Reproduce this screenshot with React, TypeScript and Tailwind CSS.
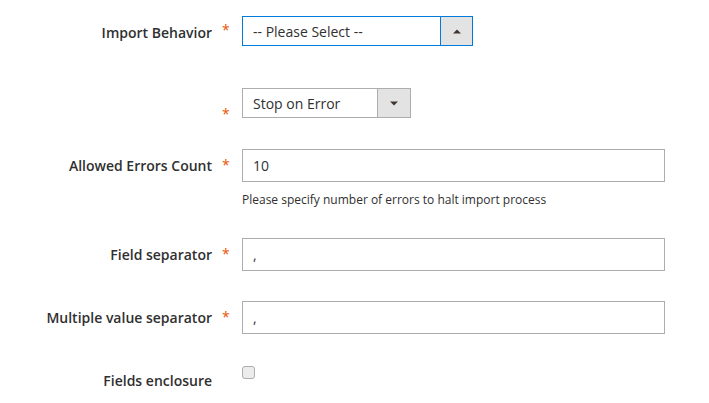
import React from "react";

const font = { fontFamily: '"Open Sans", "Liberation Sans", sans-serif' };

function Label({ text, className = "" }: { text: string; className?: string }) {
  return (
    <div className={`w-[212px] shrink-0 text-right text-[14px] font-semibold leading-[20px] text-[#303030] ${className}`}>
      {text}
    </div>
  );
}

function Star({ className = "" }: { className?: string }) {
  return (
    <div className={`w-[30px] shrink-0 pl-[10px] text-[14px] leading-[20px] text-[#eb5202] ${className}`}>*</div>
  );
}

function Arrow({ up }: { up?: boolean }) {
  return (
    <svg width="8" height="5" viewBox="0 0 8 5" className="block">
      {up ? (
        <polygon points="0,4.5 8,4.5 4,0.5" fill="#41362f" />
      ) : (
        <polygon points="0,0.5 8,0.5 4,4.5" fill="#41362f" />
      )}
    </svg>
  );
}

function TextInput({ value }: { value: string }) {
  return (
    <div className="flex h-[33px] w-[423px] items-center border border-[#adadad] bg-white pl-[10px] text-[14px] text-[#303030]">
      {value}
    </div>
  );
}

export default function App() {
  return (
    <div className="h-[403px] w-[709px] bg-white pt-[16px]" style={font}>
      {/* Row 1 */}
      <div className="flex items-center">
        <Label text="Import Behavior" className="relative top-[2px]" />
        <Star className="-mt-[2px]" />
        <div className="flex h-[30px] w-[231px] border border-[#007bdb] bg-white">
          <div className="flex flex-1 items-center pl-[10px] text-[14px] text-[#303030]">-- Please Select --</div>
          <div className="flex w-[32px] items-center justify-center border-l border-[#007bdb] bg-[#e3e3e3]">
            <Arrow up />
          </div>
        </div>
      </div>

      {/* Row 2 */}
      <div className="mt-[42px] flex h-[30px] items-start">
        <Label text="" />
        <Star className="relative top-[16px]" />
        <div className="flex h-[30px] w-[169px] border border-[#adadad] bg-white">
          <div className="flex flex-1 items-center pl-[10px] text-[14px] text-[#303030]">Stop on Error</div>
          <div className="flex w-[33px] items-center justify-center border-l border-[#adadad] bg-[#e3e3e3]">
            <Arrow />
          </div>
        </div>
      </div>

      {/* Row 3 */}
      <div className="mt-[31px] flex items-start">
        <div className="flex h-[33px] items-center">
          <Label text="Allowed Errors Count" />
          <Star className="-mt-[2px]" />
        </div>
        <div>
          <TextInput value="10" />
          <div className="mt-[9px] text-[12px] leading-[18px] text-[#303030]">
            Please specify number of errors to halt import process
          </div>
        </div>
      </div>

      {/* Row 4 */}
      <div className="mt-[29px] flex items-center">
        <Label text="Field separator" />
        <Star className="-mt-[2px]" />
        <TextInput value="," />
      </div>

      {/* Row 5 */}
      <div className="mt-[30px] flex items-center">
        <Label text="Multiple value separator" />
        <Star className="-mt-[2px]" />
        <TextInput value="," />
      </div>

      {/* Row 6 */}
      <div className="mt-[32px] flex items-start">
        <div className="pt-[5px]">
          <Label text="Fields enclosure" />
        </div>
        <div className="w-[30px] shrink-0" />
        <div className="h-[13px] w-[13px] rounded-[3px] border border-[#adadad] bg-[#ececec]" />
      </div>
    </div>
  );
}
